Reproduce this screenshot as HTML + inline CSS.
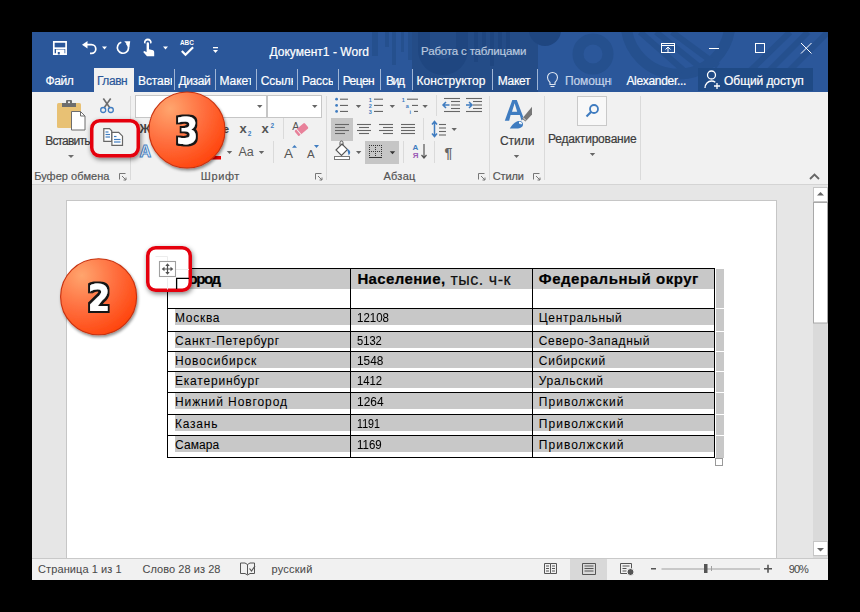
<!DOCTYPE html>
<html><head><meta charset="utf-8">
<style>
*{margin:0;padding:0;box-sizing:border-box}
html,body{width:860px;height:612px;background:#000;overflow:hidden;font-family:"Liberation Sans",sans-serif}
.a{position:absolute}
.t{position:absolute;white-space:nowrap;line-height:1}
svg{position:absolute;overflow:visible}
</style></head><body>
<!-- window base -->
<div class="a" style="left:32px;top:32px;width:796px;height:548px;background:#e6e6e6"></div>
<!-- title bar -->
<div class="a" style="left:32px;top:32px;width:796px;height:60px;background:#2b579a;overflow:hidden">
<svg style="left:0;top:0" width="796" height="60" viewBox="32 32 796 60">
<g fill="#25508e">
<rect x="372" y="32" width="6" height="24"/><rect x="385" y="32" width="4" height="15"/><rect x="392" y="32" width="4" height="33"/><rect x="401" y="32" width="3" height="20"/><rect x="408" y="32" width="4" height="28"/>
</g>
<rect x="412" y="32" width="126" height="60" fill="#244c87"/>
<g fill="#1f4680">
<path d="M418 32 h12 v14 a13 13 0 0 0 26 0 v-14 h12 v18 a25 25 0 0 1 -50 0z"/>
<rect x="474" y="32" width="4" height="30"/><rect x="482" y="32" width="4" height="22"/><rect x="490" y="32" width="4" height="34"/><rect x="498" y="32" width="4" height="18"/><rect x="506" y="32" width="4" height="26"/>
<circle cx="545" cy="30" r="16"/>
</g>
<circle cx="545" cy="30" r="16" fill="#25508e" clip-path="inset(0 0 0 0)" style="clip-path:polygon(538px 0,600px 0,600px 100px,538px 100px)"/>
<circle cx="593" cy="54" r="15" fill="none" stroke="#25508e" stroke-width="11"/>
<circle cx="678" cy="22" r="52" fill="none" stroke="#25508e" stroke-width="11"/>
<g stroke="#25508e" stroke-width="6">
<line x1="640" y1="32" x2="690" y2="76"/><line x1="656" y1="32" x2="706" y2="72"/><line x1="672" y1="32" x2="718" y2="66"/>
<line x1="745" y1="76" x2="790" y2="32"/><line x1="760" y1="80" x2="808" y2="32"/><line x1="776" y1="84" x2="828" y2="32"/>
</g>
</svg>
</div>
<!-- QAT + title icons + tabs (page coords) -->
<svg style="left:0;top:0" width="860" height="100" viewBox="0 0 860 100">
<g fill="none" stroke="#fff" stroke-width="1.7">
<path d="M53.8 41.8h12.3v12.3h-12.3z"/><path d="M54 48.2h12"/>
<path d="M87 44.7h4.5a4.3 4.3 0 0 1 0 8.6h-1.5"/>
<path d="M121.3 42.3a5.6 5.6 0 1 0 5.4 1.2"/>
<path d="M181.8 51l3.7 3.8 7.6-7.6" stroke-width="2.2"/>
</g>
<g fill="#fff">
<path d="M56 49.5h8.5v5h-8.5z"/>
<path d="M82 44.7l5.5-3.8v7.6z"/>
<path d="M124.3 41.3h5.9l-0.8 5.9z"/>
<path d="M102 46.5h5l-2.5 3z"/><path d="M163 46.5h5l-2.5 3z"/>
<path d="M144 43.2a3.9 3.9 0 1 1 7.6 0l-1.6 0.2a2.3 2.3 0 1 0 -4.4 0z"/>
<path d="M146.6 43.5a1.2 1.2 0 0 1 2.4 0v5.8l3.2 0.7c1.4 0.3 2 1 2 2.4v3.8h-7.2l-3.8-4.2 1-1 2.4 1.1z"/>
<rect x="213" y="47" width="5" height="1.3"/><path d="M213 50h5l-2.5 3z"/>
</g>
<path d="M57.8 52h2v2.5h-2z" fill="#2b579a"/>
<text x="180" y="44.8" font-family="Liberation Sans" font-size="6.4" font-weight="bold" fill="#fff">ABC</text>
<g fill="none" stroke="#fff" stroke-width="1">
<rect x="661.5" y="43.5" width="13" height="9"/><line x1="661.5" y1="45.5" x2="674.5" y2="45.5"/><path d="M665.5 49.5l2.5-2.5 2.5 2.5M668 47v5"/>
<line x1="709" y1="48.5" x2="719" y2="48.5"/>
<rect x="755.5" y="43.5" width="9" height="9"/>
<path d="M801 43l10.5 10.5M811.5 43l-10.5 10.5"/>
</g>
<rect x="94" y="68" width="40" height="24" fill="#f1f1f1"/>
<g fill="#9fb5d6">
<rect x="174" y="69" width="1" height="21"/><rect x="215" y="69" width="1" height="21"/><rect x="256" y="69" width="1" height="21"/><rect x="297" y="69" width="1" height="21"/>
<rect x="338" y="69" width="1" height="21"/><rect x="380" y="69" width="1" height="21"/><rect x="412" y="69" width="1" height="21"/><rect x="492" y="69" width="1" height="21"/><rect x="537" y="69" width="1" height="21"/>
</g>
<g fill="none" stroke="#dfe6f1" stroke-width="1.1"><path d="M550 82.5c-1.5-1.5-2.5-3-2.5-5a5 5 0 0 1 10 0c0 2-1 3.5-2.5 5v2h-5z"/><line x1="550.5" y1="86.5" x2="554.5" y2="86.5"/></g>
<rect x="698" y="68" width="115" height="23" fill="#1f4a85"/>
<g fill="none" stroke="#fff" stroke-width="1.3"><circle cx="711.5" cy="75" r="4"/><path d="M705 88c0-4 3-7 6.5-7 1.5 0 2.8.5 3.8 1.3"/><path d="M717 83v6M714 86h6"/></g>
</svg>
<!-- ribbon -->
<div class="a" style="left:32px;top:92px;width:796px;height:92px;background:#f1f1f1"></div>
<div class="a" style="left:32px;top:184px;width:796px;height:1px;background:#d4d4d4"></div>
<svg style="left:0;top:0" width="860" height="190" viewBox="0 0 860 190">
<!-- group separators -->
<g fill="#dadada">
<rect x="130" y="96" width="1" height="84"/><rect x="326" y="96" width="1" height="84"/><rect x="489" y="96" width="1" height="84"/><rect x="544" y="96" width="1" height="84"/><rect x="640" y="96" width="1" height="84"/>
<rect x="283" y="118" width="1" height="21"/><rect x="273" y="141" width="1" height="22"/>
<rect x="423" y="118" width="1" height="22"/><rect x="403" y="141" width="1" height="22"/><rect x="434" y="141" width="1" height="22"/><rect x="436" y="95" width="1" height="21"/>
</g>
<!-- clipboard -->
<rect x="57" y="103" width="24" height="25" rx="1.5" fill="#e8c174"/>
<rect x="62" y="103" width="14" height="4" fill="#6d6d6d"/><rect x="66" y="100" width="6" height="4" rx="1" fill="#6d6d6d"/><circle cx="69" cy="102.3" r="1" fill="#fff"/>
<path d="M71.5 111.5h9l4.5 4.5v14h-13.5z" fill="#fff" stroke="#6d6d6d"/><path d="M80.5 111.5v4.5h4.5" fill="none" stroke="#6d6d6d"/>
<path d="M68 155h6l-3 3z" fill="#6d6d6d"/>
<g stroke="#6d6d6d" stroke-width="1.6"><line x1="103.3" y1="98.5" x2="110" y2="108"/><line x1="110.7" y1="98.5" x2="104" y2="108"/></g>
<g fill="none" stroke="#3f7cc0" stroke-width="1.3"><circle cx="103.2" cy="110" r="2.5"/><circle cx="110.8" cy="110" r="2.5"/></g>
<!-- dialog launchers -->
<g fill="none" stroke="#777" stroke-width="1">
<path d="M119.5 179.5v-6h6M122 176l4 4M126 177.5v2.5h-2.5"/>
<path d="M315.5 179.5v-6h6M318 176l4 4M322 177.5v2.5h-2.5"/>
<path d="M478.5 179.5v-6h6M481 176l4 4M485 177.5v2.5h-2.5"/>
<path d="M533.5 179.5v-6h6M536 176l4 4M540 177.5v2.5h-2.5"/>
</g>
<!-- font group -->
<rect x="135.5" y="95.5" width="131" height="22" fill="#fff" stroke="#c6c6c6"/>
<rect x="267.5" y="95.5" width="54" height="22" fill="#fff" stroke="#c6c6c6"/>
<g fill="#666"><path d="M257 105h5.5l-2.75 3z"/><path d="M312 105h5.5l-2.75 3z"/>
<path d="M226.8 151h5.4l-2.7 3z"/><path d="M258.8 151h5.4l-2.7 3z"/><path d="M355.8 105h5.4l-2.7 3z"/><path d="M389.6 105h5.4l-2.7 3z"/><path d="M422.4 105h5.4l-2.7 3z"/>
<path d="M356 151h5.4l-2.7 3z"/><path d="M451.5 128h5.4l-2.7 3z"/><path d="M513.8 155h5.4l-2.7 3z"/><path d="M589.8 153h5.4l-2.7 3z"/></g>
<text x="139.5" y="133" font-family="Liberation Sans" font-size="12.5" font-weight="bold" fill="#444">Ж</text>
<text x="223" y="133" font-family="Liberation Sans" font-size="11" font-weight="bold" fill="#444">e</text>
<text x="239.5" y="132.8" font-family="Liberation Sans" font-size="13" font-weight="bold" fill="#555">x</text>
<text x="247.8" y="135.5" font-family="Liberation Sans" font-size="6.5" font-weight="bold" fill="#3f7cc0">2</text>
<text x="261.5" y="132.8" font-family="Liberation Sans" font-size="13" font-weight="bold" fill="#555">x</text>
<text x="270.5" y="127.5" font-family="Liberation Sans" font-size="6.5" font-weight="bold" fill="#3f7cc0">2</text>
<text x="139.5" y="157.3" font-family="Liberation Sans" font-size="16" font-weight="bold" fill="#fff" stroke="#4a86c8" stroke-width="1">A</text>
<rect x="209" y="156" width="12" height="3.5" fill="#e00"/>
<text x="238.5" y="156" font-family="Liberation Sans" font-size="12.5" fill="#595959">Aa</text>
<text x="284" y="157.6" font-family="Liberation Sans" font-size="13.5" fill="#555">A</text>
<path d="M292 147.8h5l-2.5-2.8z" fill="#3f7cc0"/>
<text x="307" y="157.6" font-family="Liberation Sans" font-size="11.5" fill="#555">A</text>
<path d="M314 145h5l-2.5 3z" fill="#3f7cc0"/>
<text x="292.3" y="130" font-family="Liberation Sans" font-size="10.5" fill="#555">A</text>
<g transform="rotate(-40 301.5 129.5)"><rect x="295" y="126" width="13" height="7" rx="1.2" fill="#e8819a"/><rect x="297.5" y="125.5" width="0.9" height="8" fill="#f1f1f1"/></g>
<!-- paragraph group -->
<g fill="#3f7cc0"><circle cx="336.6" cy="99.2" r="1.4"/><circle cx="336.6" cy="105.4" r="1.4"/><circle cx="336.6" cy="111.4" r="1.4"/></g>
<g stroke="#555" stroke-width="1"><line x1="340" y1="99.2" x2="348" y2="99.2"/><line x1="340" y1="105.4" x2="348" y2="105.4"/><line x1="340" y1="111.4" x2="348" y2="111.4"/>
<line x1="374" y1="99.2" x2="383" y2="99.2"/><line x1="374" y1="105.4" x2="383" y2="105.4"/><line x1="374" y1="111.4" x2="383" y2="111.4"/>
<line x1="407" y1="99.2" x2="418" y2="99.2"/><line x1="412" y1="105.4" x2="418" y2="105.4"/><line x1="414" y1="111.4" x2="418" y2="111.4"/></g>
<g font-family="Liberation Sans" font-size="5.5" font-weight="bold" fill="#3f7cc0">
<text x="368.8" y="101.5">1</text><text x="368.8" y="107.7">2</text><text x="368.8" y="113.7">3</text>
<text x="401.8" y="101.5">1</text><text x="405.8" y="107.7">a</text><text x="409.5" y="113.7">i</text></g>
<rect x="331" y="118" width="22" height="23" fill="#c6c6c6"/>
<g stroke="#666" stroke-width="1.1">
<line x1="335" y1="124.5" x2="349" y2="124.5"/><line x1="335" y1="127.5" x2="345" y2="127.5"/><line x1="335" y1="130.5" x2="349" y2="130.5"/><line x1="335" y1="133.5" x2="345" y2="133.5"/>
<line x1="357" y1="124.5" x2="371" y2="124.5"/><line x1="359" y1="127.5" x2="369" y2="127.5"/><line x1="357" y1="130.5" x2="371" y2="130.5"/><line x1="359" y1="133.5" x2="369" y2="133.5"/>
<line x1="379" y1="124.5" x2="393" y2="124.5"/><line x1="383" y1="127.5" x2="393" y2="127.5"/><line x1="379" y1="130.5" x2="393" y2="130.5"/><line x1="383" y1="133.5" x2="393" y2="133.5"/>
<line x1="401" y1="124.5" x2="415" y2="124.5"/><line x1="401" y1="127.5" x2="415" y2="127.5"/><line x1="401" y1="130.5" x2="415" y2="130.5"/><line x1="401" y1="133.5" x2="415" y2="133.5"/>
<line x1="439" y1="124.5" x2="446" y2="124.5"/><line x1="439" y1="128" x2="446" y2="128"/><line x1="439" y1="131.5" x2="446" y2="131.5"/><line x1="439" y1="135" x2="446" y2="135"/>
<line x1="451" y1="101.5" x2="460" y2="101.5"/><line x1="451" y1="105" x2="460" y2="105"/><line x1="451" y1="108.5" x2="460" y2="108.5"/><line x1="444" y1="98.5" x2="460" y2="98.5"/><line x1="444" y1="111.5" x2="460" y2="111.5"/>
<line x1="473" y1="101.5" x2="482" y2="101.5"/><line x1="473" y1="105" x2="482" y2="105"/><line x1="473" y1="108.5" x2="482" y2="108.5"/><line x1="466" y1="98.5" x2="482" y2="98.5"/><line x1="466" y1="111.5" x2="482" y2="111.5"/>
</g>
<g fill="none" stroke="#3f7cc0" stroke-width="1.5">
<path d="M443.5 105h6M446 102l-3 3 3 3"/><path d="M466 105h6M469 102l3 3-3 3"/>
<path d="M434.5 122v14M432 124.5l2.5-3 2.5 3M432 133.5l2.5 3 2.5-3"/>
</g>
<!-- shading icon -->
<path d="M336 150l6-6 5.5 5.5-6 6z" fill="#fff" stroke="#555" stroke-width="1.1"/>
<path d="M340 145.5v-3a1.5 1.5 0 0 1 3 0v3" fill="none" stroke="#555" stroke-width="1"/>
<path d="M348 150c1.5 1 2 2.5 1 4z" fill="#3f7cc0" stroke="#3f7cc0" stroke-width="1.2"/>
<rect x="334.5" y="156.5" width="15" height="3" fill="#fff" stroke="#777"/>
<rect x="365" y="141" width="34" height="23" fill="#c6c6c6"/>
<g fill="#333"><rect x="369" y="145" width="1" height="1"/><rect x="369" y="151" width="1" height="1"/><rect x="371" y="145" width="1" height="1"/><rect x="371" y="151" width="1" height="1"/><rect x="373" y="145" width="1" height="1"/><rect x="373" y="151" width="1" height="1"/><rect x="375" y="145" width="1" height="1"/><rect x="375" y="151" width="1" height="1"/><rect x="377" y="145" width="1" height="1"/><rect x="377" y="151" width="1" height="1"/><rect x="379" y="145" width="1" height="1"/><rect x="379" y="151" width="1" height="1"/><rect x="381" y="145" width="1" height="1"/><rect x="381" y="151" width="1" height="1"/><rect x="369" y="145" width="1" height="1"/><rect x="375" y="145" width="1" height="1"/><rect x="381" y="145" width="1" height="1"/><rect x="369" y="147" width="1" height="1"/><rect x="375" y="147" width="1" height="1"/><rect x="381" y="147" width="1" height="1"/><rect x="369" y="149" width="1" height="1"/><rect x="375" y="149" width="1" height="1"/><rect x="381" y="149" width="1" height="1"/><rect x="369" y="151" width="1" height="1"/><rect x="375" y="151" width="1" height="1"/><rect x="381" y="151" width="1" height="1"/><rect x="369" y="153" width="1" height="1"/><rect x="375" y="153" width="1" height="1"/><rect x="381" y="153" width="1" height="1"/><rect x="369" y="155" width="1" height="1"/><rect x="375" y="155" width="1" height="1"/><rect x="381" y="155" width="1" height="1"/><rect x="369" y="157" width="13" height="1"/></g>
<path d="M389.8 151.3h5.4l-2.7 3z" fill="#333"/>
<text x="412.5" y="150.3" font-family="Liberation Sans" font-size="8" font-weight="bold" fill="#3f7cc0">A</text>
<text x="412.8" y="157.8" font-family="Liberation Sans" font-size="8" font-weight="bold" fill="#9b59b6">Я</text>
<g fill="none" stroke="#555" stroke-width="1.2"><path d="M424 144v13.5M421.5 155l2.5 3 2.5-3"/></g>
<text x="444.5" y="157.8" font-family="Liberation Sans" font-size="14" font-weight="bold" fill="#666">¶</text>
<!-- styles -->
<path fill-rule="evenodd" fill="#3f7cc0" d="M504.8 120.7L512.3 99.9H516.8L523.8 118.5L521.5 120.5L519.8 115.1H510.6L509.2 120.7Z M512 111.7H517.2L514.6 103.3Z"/>
<path d="M522 118.7l10-12v7.8l-6.5 7z" fill="#777"/>
<path d="M523 117.5l3 3" stroke="#f1f1f1" stroke-width="0.9"/>
<path d="M509.8 128.5c2-3.5 5-7 9-7.5 2.5-0.3 4.5 1.5 4.2 3.8-0.3 2.5-3 3.7-6 3.7z" fill="#3f7cc0"/>
<path d="M519 121.8c1.5-0.3 3 0.5 3 2.2l-1.2 0.6-0.5-1.2-1.3 0.3z" fill="#fff"/>
<!-- editing -->
<rect x="577.5" y="96.5" width="29" height="29" fill="#f8f8f8" stroke="#c9c9c9"/>
<g fill="none" stroke="#3f7cc0" stroke-width="1.8"><circle cx="594" cy="109" r="4"/><line x1="591" y1="112" x2="586.5" y2="116.5" stroke-width="2.2"/></g>
<path d="M810 179l4.5-4.5 4.5 4.5" fill="none" stroke="#666" stroke-width="1.8"/>
</svg>
<!-- document area -->
<div class="a" style="left:66px;top:200px;width:711px;height:358px;background:#fff;border:1px solid #c6c6c6;border-bottom:none"></div>
<svg style="left:0;top:0" width="860" height="612" viewBox="0 0 860 612">
<g fill="#c8c8c8">
<rect x="175" y="269" width="539" height="20"/>
<rect x="175" y="309" width="539" height="16"/><rect x="175" y="332" width="539" height="16"/><rect x="175" y="352" width="539" height="16"/>
<rect x="175" y="372" width="539" height="16"/><rect x="175" y="393" width="539" height="16"/><rect x="175" y="415" width="539" height="16"/><rect x="175" y="436" width="539" height="16"/>
<rect x="716" y="269" width="8" height="39"/><rect x="716" y="309" width="8" height="22"/><rect x="716" y="332" width="8" height="19"/><rect x="716" y="352" width="8" height="19"/>
<rect x="716" y="372" width="8" height="20"/><rect x="716" y="393" width="8" height="21"/><rect x="716" y="415" width="8" height="20"/><rect x="716" y="436" width="8" height="22"/>
</g>
<g fill="#000">
<rect x="167" y="268" width="548" height="1"/><rect x="167" y="308" width="548" height="1"/><rect x="167" y="331" width="548" height="1"/><rect x="167" y="351" width="548" height="1"/>
<rect x="167" y="371" width="548" height="1"/><rect x="167" y="392" width="548" height="1"/><rect x="167" y="414" width="548" height="1"/><rect x="167" y="435" width="548" height="1"/><rect x="167" y="457" width="548" height="1"/>
<rect x="167" y="268" width="1" height="190"/><rect x="350" y="268" width="1" height="190"/><rect x="532" y="268" width="1" height="190"/><rect x="714" y="268" width="1" height="190"/>
</g>
<rect x="715.5" y="458.5" width="7" height="7" fill="#fff" stroke="#999"/>
</svg>
<!-- scrollbar -->
<div class="a" style="left:813px;top:187px;width:15px;height:371px;background:#dadada"></div>
<svg style="left:0;top:0" width="860" height="612" viewBox="0 0 860 612">
<rect x="813.5" y="187.5" width="14" height="14" fill="#fff" stroke="#c6c6c6"/>
<path d="M817 195.5h7l-3.5-3.5z" fill="#666"/>
<rect x="813.5" y="202.5" width="14" height="120.5" fill="#fff" stroke="#a8a8a8"/>
<rect x="813.5" y="541.5" width="14" height="14" fill="#fff" stroke="#c6c6c6"/>
<path d="M817 548h7l-3.5 3.5z" fill="#666"/>
</svg>
<!-- status bar -->
<div class="a" style="left:32px;top:558px;width:796px;height:22px;background:#f1f1f1;border-top:1px solid #c9c9c9"></div>
<svg style="left:0;top:0" width="860" height="612" viewBox="0 0 860 612">
<rect x="570" y="559" width="37" height="21" fill="#d8d8d8"/>
<g fill="none" stroke="#555" stroke-width="1">
<path d="M240.5 563v10.5h4.5l2.5 1.5 2.5-1.5h4.5V563h-4.5l-2.5 1.5-2.5-1.5z M247.5 564.5v10"/><path d="M249.5 568.5l2 2.5 3.5-5" stroke-width="1.2"/>
<path d="M544.5 563.5h6v10h-6zM550.5 563.5h6v10h-6M546 566h3M546 568.5h3M546 571h3M552 566h3M552 568.5h3M552 571h3"/>
<path d="M582.5 563.5h13v11h-13zM584.5 566h9M584.5 568.5h9M584.5 571h9"/>
<path d="M620.5 563.5h11v10h-11zM622.5 566h7M622.5 568.5h4M622.5 571h4"/>
</g>
<circle cx="630.5" cy="572" r="3.5" fill="#555" stroke="#f1f1f1" stroke-width="1"/>
<rect x="651" y="568" width="5" height="1.5" fill="#555"/>
<rect x="661.5" y="568.5" width="98.5" height="1" fill="#a0a0a0"/>
<rect x="711" y="566" width="1" height="5" fill="#a0a0a0"/>
<rect x="704" y="564" width="3.5" height="9" fill="#555"/>
<path d="M764 568.8h8M768 564.8v8" stroke="#555" stroke-width="1.6"/>
</svg>
<div class="t" style="left:269.4px;top:45.84px;font-size:12px;color:#fff;letter-spacing:0.03px;-webkit-text-stroke:0.2px #fff">Документ1 - Word</div>
<div class="t" style="left:421.1px;top:46.27px;font-size:11.5px;color:#b9c8df;letter-spacing:-0.17px;-webkit-text-stroke:0.2px #b9c8df">Работа с таблицами</div>
<div class="t" style="left:45.4px;top:74.54px;font-size:12px;color:#fff;letter-spacing:-0.34px;-webkit-text-stroke:0.2px #fff">Файл</div>
<div class="t" style="left:97.0px;top:74.54px;font-size:12px;color:#2b579a;letter-spacing:-0.45px;-webkit-text-stroke:0.2px #2b579a">Главн</div>
<div class="t" style="left:138.0px;top:74.54px;font-size:12px;color:#fff;letter-spacing:-0.10px;-webkit-text-stroke:0.2px #fff;width:33.5px;overflow:hidden">Вставк</div>
<div class="t" style="left:178.4px;top:74.54px;font-size:12px;color:#fff;letter-spacing:-0.33px;-webkit-text-stroke:0.2px #fff">Дизай</div>
<div class="t" style="left:219.6px;top:74.54px;font-size:12px;color:#fff;letter-spacing:-0.10px;-webkit-text-stroke:0.2px #fff;width:31.9px;overflow:hidden">Макет</div>
<div class="t" style="left:260.8px;top:74.54px;font-size:12px;color:#fff;letter-spacing:-0.10px;-webkit-text-stroke:0.2px #fff;width:32.0px;overflow:hidden">Ссылки</div>
<div class="t" style="left:302.0px;top:74.54px;font-size:12px;color:#fff;letter-spacing:-0.10px;-webkit-text-stroke:0.2px #fff;width:31.0px;overflow:hidden">Рассылки</div>
<div class="t" style="left:342.7px;top:74.54px;font-size:12px;color:#fff;letter-spacing:-0.55px;-webkit-text-stroke:0.2px #fff">Рецен</div>
<div class="t" style="left:385.9px;top:74.54px;font-size:12px;color:#fff;letter-spacing:-1.31px;-webkit-text-stroke:0.2px #fff">Вид</div>
<div class="t" style="left:416.6px;top:74.54px;font-size:12px;color:#fff;letter-spacing:0.04px;-webkit-text-stroke:0.2px #fff">Конструктор</div>
<div class="t" style="left:497.7px;top:74.54px;font-size:12px;color:#fff;letter-spacing:-0.27px;-webkit-text-stroke:0.2px #fff">Макет</div>
<div class="t" style="left:565.0px;top:74.54px;font-size:12px;color:#c5d3e8;letter-spacing:-0.10px;-webkit-text-stroke:0.2px #c5d3e8;width:46.5px;overflow:hidden">Помощник</div>
<div class="t" style="left:626.4px;top:74.54px;font-size:12px;color:#fff;letter-spacing:-0.31px;-webkit-text-stroke:0.2px #fff">Alexander...</div>
<div class="t" style="left:724.1px;top:74.54px;font-size:12px;color:#fff;letter-spacing:-0.08px;-webkit-text-stroke:0.2px #fff">Общий доступ</div>
<div class="t" style="left:34.2px;top:170.69px;font-size:11px;color:#555;letter-spacing:0.04px;-webkit-text-stroke:0.2px #555">Буфер обмена</div>
<div class="t" style="left:200.8px;top:170.69px;font-size:11px;color:#555;letter-spacing:0.60px;-webkit-text-stroke:0.2px #555">Шрифт</div>
<div class="t" style="left:383.4px;top:170.69px;font-size:11px;color:#555;letter-spacing:0.29px;-webkit-text-stroke:0.2px #555">Абзац</div>
<div class="t" style="left:492.8px;top:170.69px;font-size:11px;color:#555;letter-spacing:-0.15px;-webkit-text-stroke:0.2px #555">Стили</div>
<div class="t" style="left:45.2px;top:134.84px;font-size:12px;color:#3c3c3c;letter-spacing:-0.81px;-webkit-text-stroke:0.2px #3c3c3c">Вставить</div>
<div class="t" style="left:499.9px;top:134.84px;font-size:12px;color:#3c3c3c;letter-spacing:-0.02px;-webkit-text-stroke:0.2px #3c3c3c">Стили</div>
<div class="t" style="left:547.9px;top:132.64px;font-size:12px;color:#3c3c3c;letter-spacing:-0.20px;-webkit-text-stroke:0.2px #3c3c3c">Редактирование</div>
<div class="t" style="left:38.1px;top:564.09px;font-size:11px;color:#4a4a4a;letter-spacing:0.08px;-webkit-text-stroke:0.05px #4a4a4a">Страница 1 из 1</div>
<div class="t" style="left:142.4px;top:564.09px;font-size:11px;color:#4a4a4a;letter-spacing:0.06px;-webkit-text-stroke:0.05px #4a4a4a">Слово 28 из 28</div>
<div class="t" style="left:271.4px;top:564.09px;font-size:11px;color:#4a4a4a;letter-spacing:0.25px;-webkit-text-stroke:0.05px #4a4a4a">русский</div>
<div class="t" style="left:788.8px;top:564.09px;font-size:11px;color:#4a4a4a;letter-spacing:-0.97px;-webkit-text-stroke:0.05px #4a4a4a">90%</div>
<div class="t" style="left:188.4px;top:271.40px;font-size:15px;color:#000;letter-spacing:-1.37px;-webkit-text-stroke:0.2px #000;font-weight:bold">ород</div>
<div class="t" style="left:357.4px;top:271.40px;font-size:15px;color:#000;letter-spacing:0.37px;-webkit-text-stroke:0.2px #000;font-weight:bold">Население,</div>
<div class="t" style="left:450.4px;top:271.76px;font-size:16px;color:#111;letter-spacing:0.54px;-webkit-text-stroke:0.2px #111">тыс. ч-к</div>
<div class="t" style="left:538.8px;top:271.40px;font-size:15px;color:#000;letter-spacing:0.55px;-webkit-text-stroke:0.2px #000;font-weight:bold">Федеральный округ</div>
<div class="t" style="left:175.0px;top:311.54px;font-size:12px;color:#000;letter-spacing:0.71px;-webkit-text-stroke:0.05px #000">Москва</div>
<div class="t" style="left:357.0px;top:311.54px;font-size:12px;color:#000;letter-spacing:0.00px;-webkit-text-stroke:0.05px #000;transform:scaleX(0.956);transform-origin:0 0">12108</div>
<div class="t" style="left:538.8px;top:311.54px;font-size:12px;color:#000;letter-spacing:0.68px;-webkit-text-stroke:0.05px #000">Центральный</div>
<div class="t" style="left:175.0px;top:335.14px;font-size:12px;color:#000;letter-spacing:0.71px;-webkit-text-stroke:0.05px #000">Санкт-Петербург</div>
<div class="t" style="left:357.0px;top:335.14px;font-size:12px;color:#000;letter-spacing:0.00px;-webkit-text-stroke:0.05px #000;transform:scaleX(0.929);transform-origin:0 0">5132</div>
<div class="t" style="left:538.8px;top:335.14px;font-size:12px;color:#000;letter-spacing:0.64px;-webkit-text-stroke:0.05px #000">Северо-Западный</div>
<div class="t" style="left:175.0px;top:354.54px;font-size:12px;color:#000;letter-spacing:0.88px;-webkit-text-stroke:0.05px #000">Новосибирск</div>
<div class="t" style="left:357.0px;top:354.54px;font-size:12px;color:#000;letter-spacing:0.00px;-webkit-text-stroke:0.05px #000;transform:scaleX(0.985);transform-origin:0 0">1548</div>
<div class="t" style="left:538.8px;top:354.54px;font-size:12px;color:#000;letter-spacing:0.76px;-webkit-text-stroke:0.05px #000">Сибирский</div>
<div class="t" style="left:175.0px;top:374.84px;font-size:12px;color:#000;letter-spacing:0.80px;-webkit-text-stroke:0.05px #000">Екатеринбург</div>
<div class="t" style="left:357.0px;top:374.84px;font-size:12px;color:#000;letter-spacing:0.00px;-webkit-text-stroke:0.05px #000;transform:scaleX(0.940);transform-origin:0 0">1412</div>
<div class="t" style="left:538.8px;top:374.84px;font-size:12px;color:#000;letter-spacing:0.74px;-webkit-text-stroke:0.05px #000">Уральский</div>
<div class="t" style="left:175.0px;top:396.24px;font-size:12px;color:#000;letter-spacing:0.90px;-webkit-text-stroke:0.05px #000">Нижний Новгород</div>
<div class="t" style="left:357.0px;top:396.24px;font-size:12px;color:#000;letter-spacing:0.00px;-webkit-text-stroke:0.05px #000;transform:scaleX(0.993);transform-origin:0 0">1264</div>
<div class="t" style="left:538.8px;top:396.24px;font-size:12px;color:#000;letter-spacing:1.03px;-webkit-text-stroke:0.05px #000">Приволжский</div>
<div class="t" style="left:175.0px;top:418.14px;font-size:12px;color:#000;letter-spacing:0.78px;-webkit-text-stroke:0.05px #000">Казань</div>
<div class="t" style="left:357.0px;top:418.14px;font-size:12px;color:#000;letter-spacing:0.00px;-webkit-text-stroke:0.05px #000;transform:scaleX(0.888);transform-origin:0 0">1191</div>
<div class="t" style="left:538.8px;top:418.14px;font-size:12px;color:#000;letter-spacing:1.03px;-webkit-text-stroke:0.05px #000">Приволжский</div>
<div class="t" style="left:175.0px;top:439.34px;font-size:12px;color:#000;letter-spacing:0.11px;-webkit-text-stroke:0.05px #000">Самара</div>
<div class="t" style="left:357.0px;top:439.34px;font-size:12px;color:#000;letter-spacing:0.00px;-webkit-text-stroke:0.05px #000;transform:scaleX(0.955);transform-origin:0 0">1169</div>
<div class="t" style="left:538.8px;top:439.34px;font-size:12px;color:#000;letter-spacing:1.03px;-webkit-text-stroke:0.05px #000">Приволжский</div>
<!-- callouts -->
<svg style="left:0;top:0" width="860" height="612" viewBox="0 0 860 612">
<defs>
<filter id="sh" x="-30%" y="-30%" width="160%" height="160%"><feGaussianBlur in="SourceAlpha" stdDeviation="2.5"/><feOffset dx="1" dy="2"/><feComponentTransfer><feFuncA type="linear" slope="0.5"/></feComponentTransfer><feMerge><feMergeNode/><feMergeNode in="SourceGraphic"/></feMerge></filter>
<filter id="sh2" x="-30%" y="-30%" width="160%" height="160%"><feGaussianBlur in="SourceAlpha" stdDeviation="1.5"/><feOffset dx="1" dy="1.5"/><feComponentTransfer><feFuncA type="linear" slope="0.45"/></feComponentTransfer><feMerge><feMergeNode/><feMergeNode in="SourceGraphic"/></feMerge></filter>
<filter id="outl" x="-20%" y="-20%" width="140%" height="140%"><feMorphology in="SourceAlpha" operator="dilate" radius="1.5" result="d"/><feFlood flood-color="#151515"/><feComposite in2="d" operator="in" result="o"/><feMerge><feMergeNode in="o"/><feMergeNode in="SourceGraphic"/></feMerge></filter>
<radialGradient id="rg" cx="0.28" cy="0.22" r="0.95">
<stop offset="0" stop-color="#ffa56e"/><stop offset="0.45" stop-color="#ff7040"/><stop offset="1" stop-color="#ff3a00"/>
</radialGradient>
</defs>
<rect x="91.75" y="120.75" width="46.5" height="35" rx="8" fill="#f1f1f1" stroke="#e5000e" stroke-width="3.5" filter="url(#sh)"/>
<path d="M103.8 128.6h5.7l2.2 2.2v10.6h-7.9z" fill="#fff" stroke="#666" stroke-width="1.2"/>
<path d="M111.9 132.4h6.8l3.8 3.8v9.1h-10.6z" fill="#fff" stroke="#666" stroke-width="1.2"/>
<g stroke="#3f7cc0" stroke-width="1.2"><line x1="105.5" y1="132" x2="108.5" y2="132"/><line x1="105.5" y1="134.5" x2="110" y2="134.5"/><line x1="105.5" y1="137" x2="110" y2="137"/>
<line x1="114" y1="136.5" x2="116.5" y2="136.5"/><line x1="114" y1="139.5" x2="120.5" y2="139.5"/><line x1="114" y1="142" x2="120.5" y2="142"/></g>

<rect x="147.75" y="247.75" width="42.5" height="42.5" rx="8" fill="#fff" stroke="#e5000e" stroke-width="3.5" filter="url(#sh)"/>
<g stroke="#ececec" stroke-width="1" fill="none"><path d="M155.5 256.5h12v12M167.5 278v11.5M176 269.5h13"/></g>
<rect x="159.5" y="261.5" width="16" height="15" fill="#fff" stroke="#a0a0a0" stroke-width="1.1"/>
<g stroke="#505050" stroke-width="1.2" fill="none"><path d="M167.5 264.5v9M163 269h9"/></g>
<g fill="#505050"><path d="M165.3 266l2.2-2.8 2.2 2.8z"/><path d="M165.3 272l2.2 2.8 2.2-2.8z"/><path d="M164.5 266.8l-2.8 2.2 2.8 2.2z"/><path d="M170.5 266.8l2.8 2.2-2.8 2.2z"/></g>
<path d="M176.6 289V278.3H189" fill="none" stroke="#000" stroke-width="1.3"/>
<g filter="url(#sh2)"><circle cx="187" cy="130" r="38" fill="url(#rg)" stroke="#c8300c" stroke-width="1.1"/></g>
<g filter="url(#sh2)"><circle cx="98.6" cy="296.8" r="38" fill="url(#rg)" stroke="#c8300c" stroke-width="1.1"/></g>
<path filter="url(#outl)" fill="#fff" d="M178.1 117.6C180.5 116.7 183.5 116.4 186.8 116.4C192.2 116.4 195.3 119.2 195.3 123C195.3 126 193.6 128.3 191.2 129.6C194.2 130.7 195.8 133.2 195.8 136.3C195.8 141.3 191.8 144.4 186 144.4C183 144.4 180.3 144 178.1 143.2V137.6C180.2 138 182.6 138.1 185.2 138.1C188 138.1 189.8 136.9 189.8 134.8C189.8 132.5 188 131.2 185 131.2H181.7V128H184.8C187.6 128 189.4 126.6 189.4 124.6C189.4 122.6 187.8 121.4 185.4 121.4C182.8 121.4 180.4 121.8 178.1 122.6Z"/>
<path filter="url(#outl)" fill="#fff" d="M90.1 285.4C92.2 284 94.8 283.5 98 283.5C103.8 283.5 107.5 286.5 107.5 291.2C107.5 294.8 105.6 297.3 102.3 300.3L97.8 306H107.6V311.1H90.1V304.5L97.5 297.2C100 294.8 101.2 293.6 101.2 291.7C101.2 290 99.8 289.2 97.8 289.2C95.3 289.2 92.6 290 90.1 291.4Z"/>
</svg>
</body></html>
